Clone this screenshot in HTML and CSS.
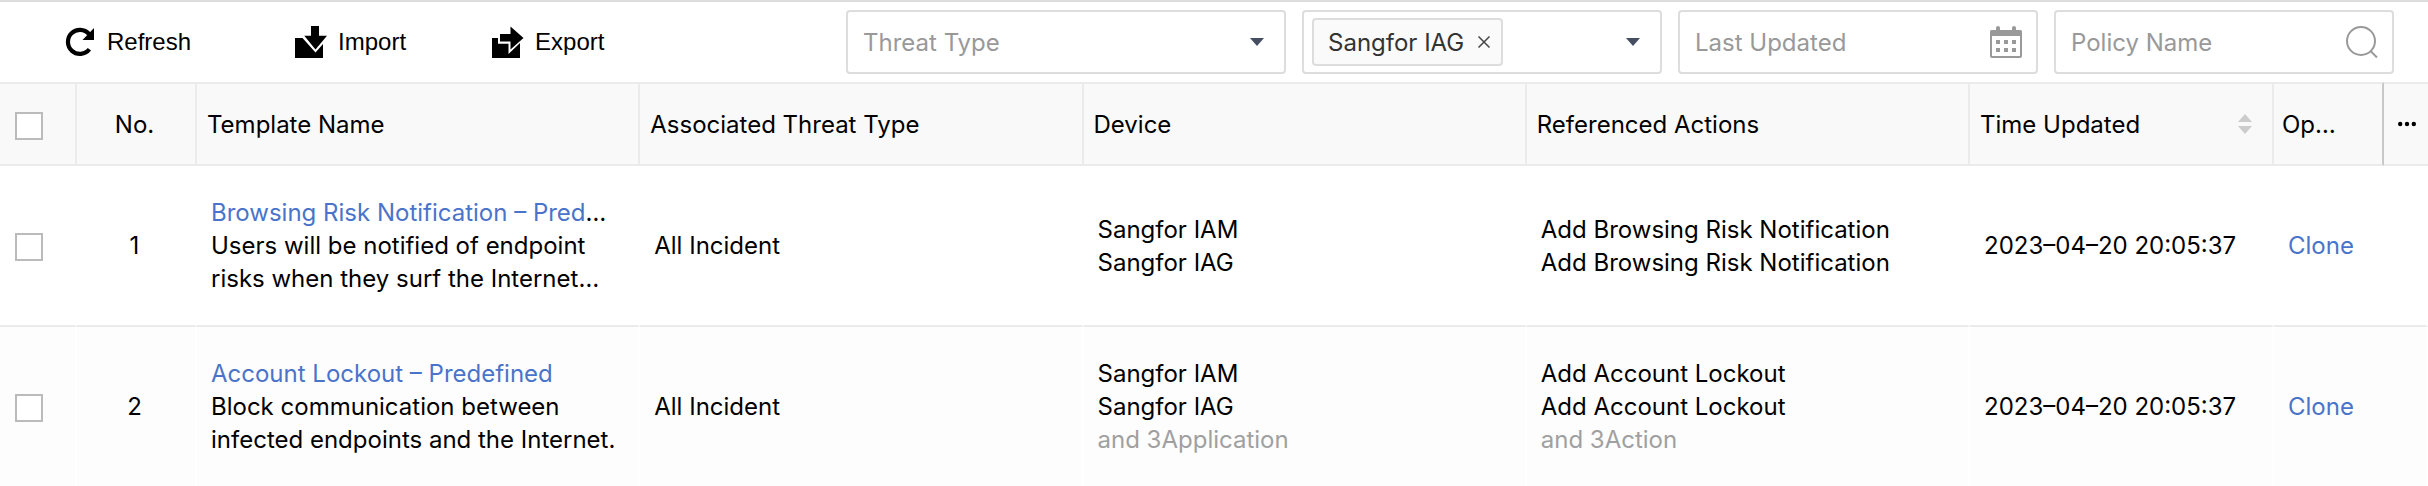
FILE: index.html
```html
<!DOCTYPE html>
<html lang="en">
<head>
    <meta charset="UTF-8">
    <meta name="viewport" content="width=device-width, initial-scale=1.0">
    <title>Templates</title>
    <link rel="stylesheet" href="styles.css">
</head>
<body>
<div class="toolbar">
    <div class="actions">
        <button type="button" class="action action-refresh">
            <svg class="icon" viewBox="0 0 32 32"><path d="M25.4 23.3A12 12 0 1 1 25 8" fill="none" stroke="#000" stroke-width="4.2"/><path d="M30 2v12H18.5z"/></svg>
            Refresh
        </button>
        <button type="button" class="action">
            <svg class="icon" viewBox="0 0 32 32"><path d="M0 12h7.5l13 14.5 7.5-8.5V32H0z"/><path d="M16 0h8v9.7h8L20.5 23.5 9.3 9.7H16z"/></svg>
            Import
        </button>
        <button type="button" class="action">
            <svg class="icon" viewBox="0 0 32 32"><path d="M0 12h6v5.7h10.5V28L28 17v15H0z"/><path d="M8 8h10.5V0.5L31.5 12 18.5 23.5V15.5H8z"/></svg>
            Export
        </button>
    </div>
    <div class="filters">
        <div class="field field-wide">
            <select class="placeholder" aria-label="Threat Type">
                <option>Threat Type</option>
            </select>
            <svg class="arrow" viewBox="0 0 14 8"><path d="M0 0h14L7 8z"/></svg>
        </div>
        <div class="field field-tags">
            <span class="tag">Sangfor IAG
                <button type="button" aria-label="Remove Sangfor IAG"><svg viewBox="0 0 12 12"><path d="M0.5 0.5l11 11M11.5 0.5l-11 11"/></svg></button>
            </span>
            <select aria-label="Device">
                <option></option>
            </select>
            <svg class="arrow" viewBox="0 0 14 8"><path d="M0 0h14L7 8z"/></svg>
        </div>
        <div class="field">
            <input type="text" placeholder="Last Updated" aria-label="Last Updated">
            <svg class="icon" viewBox="0 0 32 32">
                <path d="M1 8h30v22a1 1 0 0 1-1 1H2a1 1 0 0 1-1-1z" fill="none" stroke="#999" stroke-width="2"/>
                <path d="M0 10V5.5a1.5 1.5 0 0 1 1.5-1.5H6V2a2 2 0 0 1 4 0v2h12V2a2 2 0 0 1 4 0v2h4.5A1.5 1.5 0 0 1 32 5.5V10z" fill="#999"/>
                <path d="M6 14h4v4H6zM14 14h4v4h-4zM22 14h4v4h-4zM6 22h4v4H6zM14 22h4v4h-4zM22 22h4v4h-4z" fill="#999"/>
            </svg>
        </div>
        <div class="field field-search">
            <input type="text" placeholder="Policy Name" aria-label="Policy Name">
            <svg class="icon" viewBox="0 0 32 32" fill="none" stroke="#999" stroke-width="2"><circle cx="15" cy="15" r="14"/><path d="M24.5 25l6.5 6.5"/></svg>
        </div>
    </div>
</div>

<table class="grid">
    <colgroup>
        <col class="col-check">
        <col class="col-no">
        <col>
        <col>
        <col>
        <col>
        <col class="col-time">
        <col class="col-op">
        <col class="col-more">
    </colgroup>
    <thead>
        <tr>
            <th class="check"><input type="checkbox" aria-label="Select all"></th>
            <th class="no">No.</th>
            <th>Template Name</th>
            <th>Associated Threat Type</th>
            <th>Device</th>
            <th>Referenced Actions</th>
            <th>
                <div class="sortable">Time Updated
                    <svg class="sort" viewBox="0 0 14 20"><path d="M7 0l7 8H0zM0 12h14l-7 8z"/></svg>
                </div>
            </th>
            <th class="op">Op…</th>
            <th class="more">
                <button type="button" aria-label="Columns"><svg viewBox="0 0 18 6"><circle cx="2.2" cy="3" r="2.2"/><circle cx="9" cy="3" r="2.2"/><circle cx="15.8" cy="3" r="2.2"/></svg></button>
            </th>
        </tr>
    </thead>
    <tbody>
        <tr>
            <td class="check"><input type="checkbox" aria-label="Select row 1"></td>
            <td class="no">1</td>
            <td>
                <div><a href="#">Browsing Risk Notification – Pred</a>…</div>
                <div>Users will be notified of endpoint risks when they surf the Internet…</div>
            </td>
            <td>All Incident</td>
            <td>Sangfor IAM<br>Sangfor IAG</td>
            <td>Add Browsing Risk Notification<br>Add Browsing Risk Notification</td>
            <td>2023–04–20 20:05:37</td>
            <td colspan="2"><a href="#">Clone</a></td>
        </tr>
        <tr>
            <td class="check"><input type="checkbox" aria-label="Select row 2"></td>
            <td class="no">2</td>
            <td>
                <div><a href="#">Account Lockout – Predefined</a></div>
                <div>Block communication between infected endpoints and the Internet.</div>
            </td>
            <td>All Incident</td>
            <td>Sangfor IAM<br>Sangfor IAG<br><span class="muted">and 3Application</span></td>
            <td>Add Account Lockout<br>Add Account Lockout<br><span class="muted">and 3Action</span></td>
            <td>2023–04–20 20:05:37</td>
            <td colspan="2"><a href="#">Clone</a></td>
        </tr>
    </tbody>
</table>
</body>
</html>
```

FILE: styles.css
```css
* {
    box-sizing: border-box;
}
body {
    margin: 0;
    background: #fff;
    color: #000;
    font-family: Inter, "Liberation Sans", sans-serif;
    font-size: 24px;
    line-height: 33px;
    overflow: hidden;
}
a {
    color: #4a74c9;
    text-decoration: none;
}
button {
    padding: 0;
    border: none;
    background: none;
    color: inherit;
    cursor: pointer;
}
.icon {
    width: 32px;
    height: 32px;
    flex: none;
}

/* toolbar */
.toolbar {
    display: flex;
    justify-content: space-between;
    align-items: center;
    padding: 8px 34px 8px 64px;
    border-top: 2px solid #ddd;
}
.actions {
    display: flex;
    gap: 86px;
}
.action {
    display: flex;
    align-items: center;
    gap: 11px;
    font-family: "Liberation Sans", Arial, sans-serif;
    font-size: 24px;
}
.action-refresh {
    padding-right: 18px;
}
.filters {
    display: flex;
    gap: 16px;
}
.field {
    display: flex;
    align-items: center;
    width: 360px;
    height: 64px;
    padding: 0 14px 0 15px;
    border: 2px solid #ddd;
    border-radius: 4px;
    background: #fff;
}
.field-wide {
    width: 440px;
    padding-right: 20px;
}
.field-tags {
    padding: 0 20px 0 8px;
}
.field-search {
    width: 340px;
}
.field input,
.field select {
    flex: 1;
    min-width: 0;
    padding: 0;
    border: none;
    outline: none;
    background: none;
    appearance: none;
    color: #333;
    font: inherit;
}
.field .placeholder,
.field input::placeholder {
    color: #999;
}
.arrow {
    width: 14px;
    height: 8px;
    flex: none;
    fill: #454e60;
}
.tag {
    display: flex;
    align-items: center;
    gap: 14px;
    height: 48px;
    padding: 0 11px 0 14px;
    border: 2px solid #ddd;
    border-radius: 4px;
    background: #fafafa;
    color: #333;
}
.tag button {
    display: flex;
}
.tag svg {
    width: 12px;
    height: 12px;
    stroke: #444;
    stroke-width: 1.5;
}

/* table */
.grid {
    width: 100%;
    table-layout: fixed;
    border-collapse: separate;
    border-spacing: 0;
}
.col-check {
    width: 77px;
}
.col-no {
    width: 120px;
}
.col-time {
    width: 304px;
}
.col-op {
    width: 110px;
}
.col-more {
    width: 44px;
}
th {
    height: 84px;
    padding: 0 10px;
    border: 2px solid #ebebeb;
    border-left: none;
    background: #f9f9f9;
    font-weight: normal;
    text-align: left;
}
td {
    height: 161px;
    padding: 0 14px;
    border-right: 2px solid #fff;
    border-bottom: 2px solid #ebebeb;
}
tbody tr:nth-child(even) td {
    background: #fdfdfd;
}
.check {
    padding: 3px 0 0 15px;
}
.check input {
    display: block;
    width: 28px;
    height: 28px;
    margin: 0;
    border: 2px solid #bbb;
    background: #fff;
    appearance: none;
}
.no {
    padding: 0 3px 0 0;
    text-align: center;
}
.sortable {
    display: flex;
    justify-content: space-between;
    align-items: center;
    padding-right: 10px;
}
.sort {
    width: 14px;
    height: 20px;
    fill: #ccc;
}
.op {
    padding: 0 8px;
    border-right-color: #c8c8c8;
}
.more {
    padding: 0 0 0 14px;
    border-right: none;
}
.more button {
    display: flex;
}
.more svg {
    width: 18px;
    height: 6px;
}
.muted {
    color: #a0a0a0;
}
```
